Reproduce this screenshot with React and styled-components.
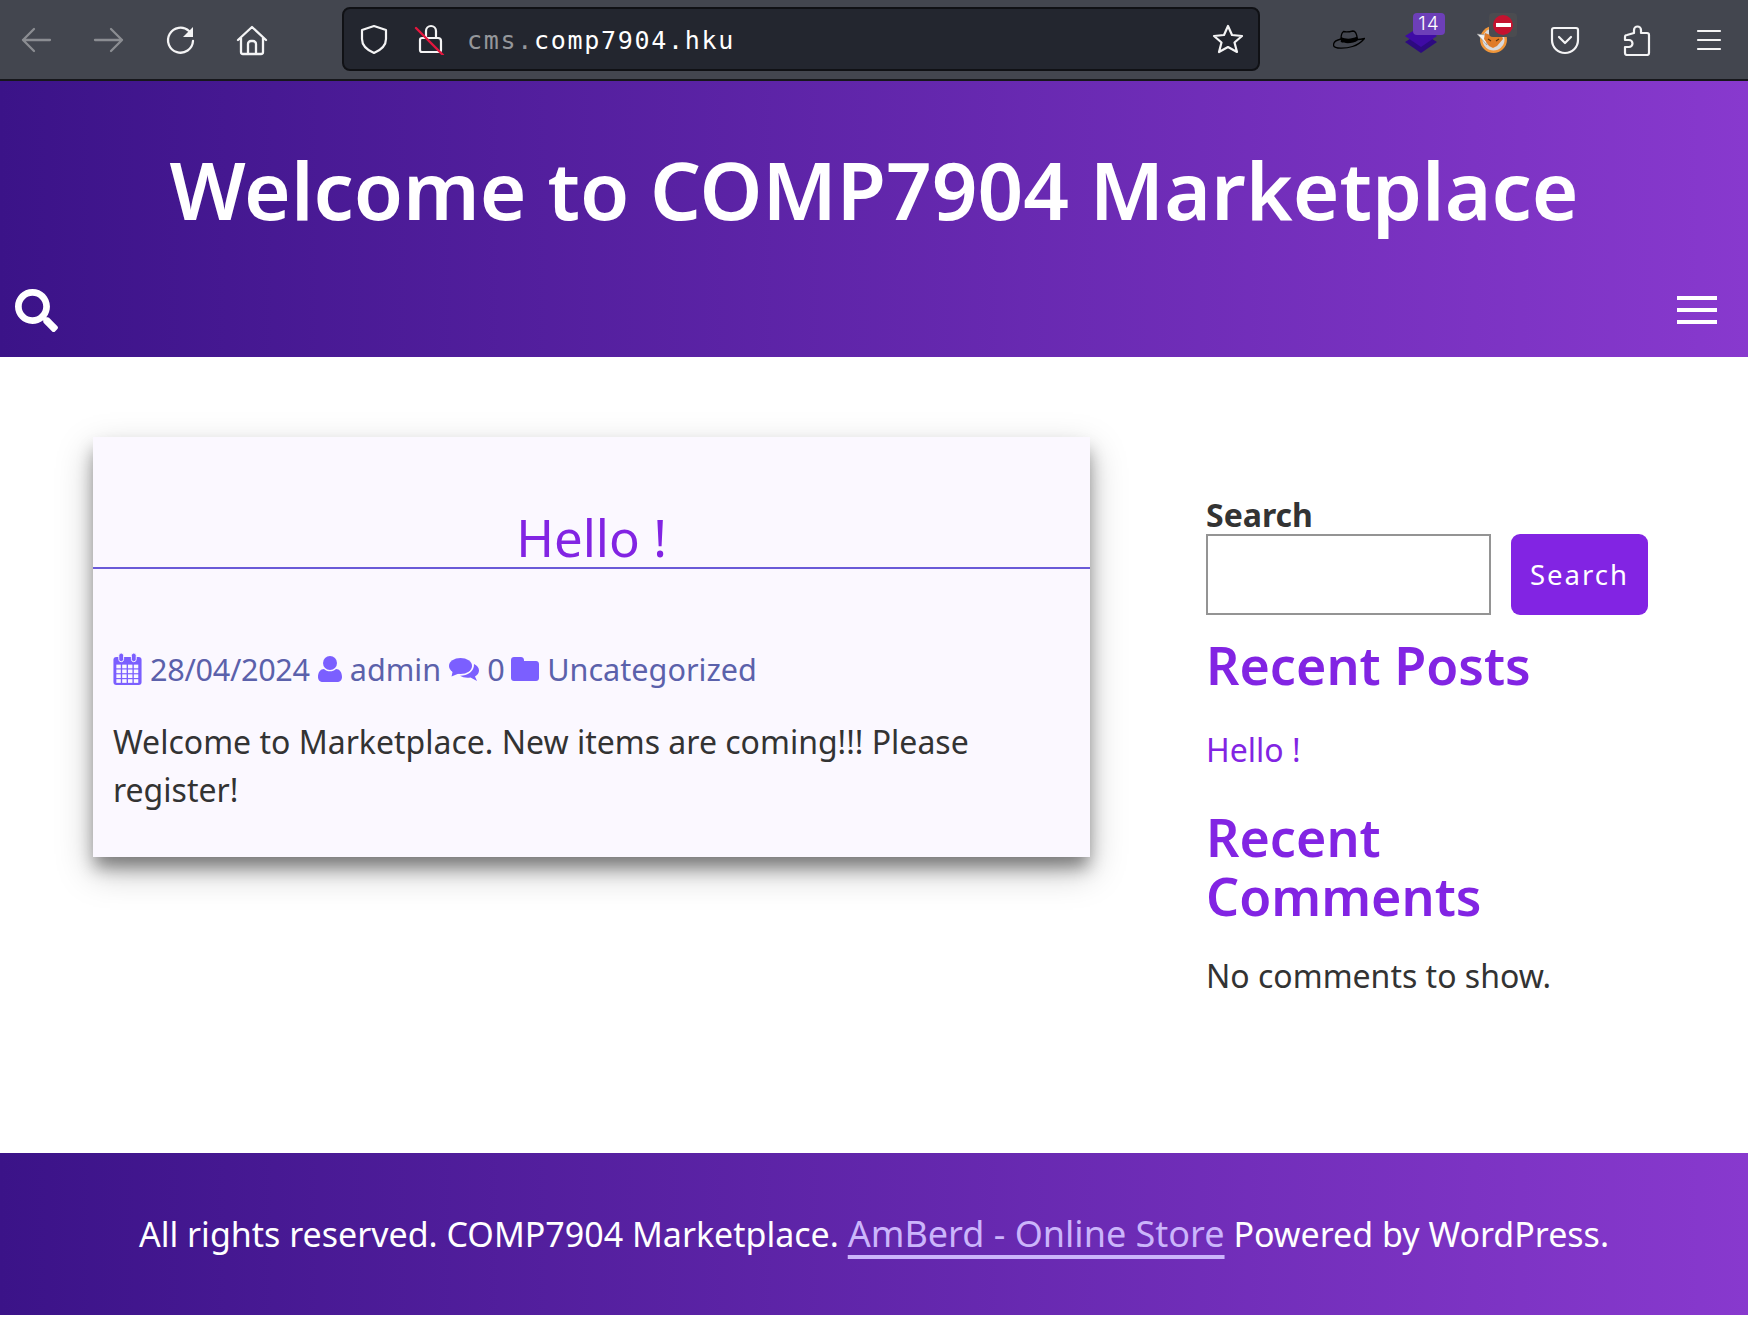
import React from "react";
import styled, { createGlobalStyle } from "styled-components";
import { FaSearch } from "react-icons/fa";

const Global = createGlobalStyle`
  html, body { margin: 0; padding: 0; background: #fff; }
  body { font-family: "Noto Sans", sans-serif; color: #333; }
  * { box-sizing: border-box; }
`;
const gradient = "linear-gradient(90deg, #3b1388 0%, #8839ce 100%)";

const Toolbar = styled.div`
  height: 81px; background: #43464f; border-bottom: 2px solid #16171b;
  display: flex; align-items: center; position: relative; padding-left: 19px;
`;
const NavIcon = styled.svg`
  width: 34px; height: 34px; flex: none; margin-right: ${p => p.$mr}px;
  fill: none; stroke: ${p => (p.$dim ? "#8b8d92" : "#f4f4f5")}; stroke-width: 2.3;
  stroke-linecap: round; stroke-linejoin: round;
`;
const UrlBar = styled.div`
  width: 918px; height: 64px; margin: 0 0 1px 36px; background: #23262f;
  border: 2px solid #101115; border-radius: 8px; display: flex; align-items: center;
  padding-left: 14px; padding-right: 14px; flex: none;
`;
const UrlIcon = styled.svg`
  width: 32px; height: 32px; flex: none; margin-right: ${p => p.$mr || 0}px;
  fill: none; stroke: #f4f4f5; stroke-width: 2.2; stroke-linecap: round; stroke-linejoin: round;
`;
const UrlText = styled.div`
  font-family: "DejaVu Sans Mono", monospace; font-size: 25px; color: #fff; flex: 1;
  letter-spacing: 1.7px; margin-left: 21px; padding-top: 2px;
`;
const Dim = styled.span` color: #95979b; `;
const Exts = styled.div` display: flex; align-items: center; margin-left: 53px; `;
const Ext = styled.div`
  width: 72px; height: 40px; display: flex; align-items: center; justify-content: center;
  position: relative; flex: none;
`;
const CountBadge = styled.span`
  position: absolute; left: 28px; top: -7px; background: #6d3fb8; color: #fff; width: 32px; height: 22px;
  border-radius: 4px; font-size: 19px; line-height: 22px; text-align: center; font-family: "Inter", sans-serif;
  font-weight: 300; letter-spacing: 1px;
`;
const BlockBadge = styled.span`
  position: absolute; left: 32px; top: -7px; width: 28px; height: 24px; background: #4b4c50; border-radius: 4px;
  display: flex; align-items: center; justify-content: center;
`;
const BlockDot = styled.span`
  width: 20px; height: 20px; background: #c4122f; border-radius: 50%; display: flex; align-items: center; justify-content: center;
`;
const BlockBar = styled.span` width: 15px; height: 4px; background: #fff; `;

const Hero = styled.header`
  height: 276px; background: ${gradient}; color: #fff; display: flex; flex-direction: column;
`;
const Title = styled.h1`
  margin: 0; text-align: center; font-size: 80px; font-weight: 600; line-height: 110px; padding-top: 53px; height: 207px;
`;
const HeroBar = styled.div`
  display: flex; justify-content: space-between; align-items: center; padding: 0 31px 0 15px; height: 44px;
`;
const Burger = styled.div`
  width: 40px; height: 28px; display: flex; flex-direction: column; justify-content: space-between;
`;
const BurgerLine = styled.span` height: 4px; background: #fff; display: block; `;

const Main = styled.main`
  display: flex; align-items: flex-start; padding: 80px 0 0 93px; height: 796px;
`;
const Card = styled.article`
  width: 997px; height: 420px; background: #fbf8ff; flex: none;
  box-shadow: 0 12px 16px -2px rgba(0,0,0,.4), 0 14px 34px rgba(0,0,0,.25);
`;
const PostTitle = styled.h2`
  margin: 0; height: 132px; border-bottom: 2px solid #6a5ad8; text-align: center; color: #8224e3;
  font-size: 51px; font-weight: 400; line-height: 67px; padding-top: 67px;
`;
const Meta = styled.div`
  display: flex; align-items: center; padding: 0 20px; margin-top: 84px; height: 32px; font-size: 30.6px; color: #5b61ab;
  gap: 8px;
`;
const MetaDigits = styled.span` letter-spacing: ${p => p.$ls}px; `;
const MetaSvg = styled.svg`
  flex: none; fill: #7b5fff; display: block;
`;
const Body = styled.p`
  margin: 33px 20px 0; font-size: 32px; line-height: 48px; color: #333;
`;
const Side = styled.aside`
  width: 450px; margin-left: 116px; padding-top: 60px; flex: none;
`;
const Label = styled.div` font-size: 32px; font-weight: 700; color: #333; line-height: 36px; height: 37px; `;
const SearchRow = styled.div` display: flex; gap: 20px; `;
const Input = styled.input`
  width: 285px; height: 81px; border: 2px solid #949494; background: #fff; border-radius: 0; flex: none;
`;
const Btn = styled.button`
  width: 137px; height: 81px; border: 0; background: #8224e3; color: #fff; border-radius: 9px; flex: none;
  font-family: "Noto Sans", sans-serif; font-size: 27.5px; letter-spacing: 2px;
`;
const SideHead = styled.h2`
  margin: ${p => p.$mt}px 0 0; color: #8224e3; font-size: 52px; line-height: 59px; font-weight: 600; width: 440px;
`;
const SideLink = styled.div` margin-top: 34px; color: #8224e3; font-size: 32px; line-height: 44px; `;
const SideText = styled.div` margin-top: 29px; color: #333; font-size: 32px; line-height: 44px; `;

const Footer = styled.footer`
  height: 162px; padding-bottom: 2px; background: ${gradient}; color: #fff; font-size: 34px;
  display: flex; align-items: center; justify-content: center;
`;
const FootLine = styled.div` white-space: pre; `;
const FootLink = styled.a`
  color: #cbb5fb; font-size: 36px; text-decoration: underline; text-decoration-thickness: 4px;
  text-underline-offset: 8px; text-decoration-skip-ink: none;
`;
const FootPad = styled.div` height: 11px; `;

const cols = [3, 9, 15, 21];
const rows = [12, 17, 22, 27];

export default function App() {
  return (
    <>
      <Global />
      <Toolbar>
        <NavIcon viewBox="0 0 34 34" $dim $mr={39}><path d="M31 17H4M15 6 4 17l11 11" /></NavIcon>
        <NavIcon viewBox="0 0 34 34" $dim $mr={38}><path d="M3 17h27M19 6l11 11-11 11" /></NavIcon>
        <NavIcon viewBox="0 0 34 34" $mr={37}><path d="M29 18a12.5 12.5 0 1 1-4-10" /><path d="M29 4v10H19z" fill="#f4f4f5" stroke="none" /></NavIcon>
        <NavIcon viewBox="0 0 34 34" $mr={37}><path d="M3 17 17 4l14 13M6 15v14a2 2 0 0 0 2 2h18a2 2 0 0 0 2-2V15M13 31V21a3 3 0 0 1 3-3h2a3 3 0 0 1 3 3v10" /></NavIcon>
        <UrlBar>
          <UrlIcon viewBox="0 0 32 32" $mr={24}><path d="M16 3 4 7v9c0 7 5 11 12 14 7-3 12-7 12-14V7z" /></UrlIcon>
          <UrlIcon viewBox="0 0 32 32">
            <path d="M8 15h16a3 3 0 0 1 3 3v9a2 2 0 0 1-2 2H8a2 2 0 0 1-2-2V17a2 2 0 0 1 2-2zM12 15V8a5 5 0 0 1 10 0v7" />
            <path d="M2 5l27 27" stroke="#e3173e" strokeWidth="2.4" />
          </UrlIcon>
          <UrlText><Dim>cms.</Dim>comp7904.hku</UrlText>
          <UrlIcon viewBox="0 0 32 32"><path d="m16 3 4 9 10 1-7.500 6.500L25 29l-9-5-9 5 2.500-9.500L2 13l10-1z" /></UrlIcon>
        </UrlBar>
        <Exts>
          <Ext>
            <svg width="32" height="20" viewBox="0 0 32 20">
              <path d="M8 9c0-3 .5-6 2.500-7.500 3 .8 6 .3 9.500-.5 2.500 0 4 4 4.500 8.500 3 0 5-.5 7-1-3 3.500-7 6.500-12 8-6 2-19 3-19-1.500 0-3 3-5 7.500-6z" fill="none" stroke="#000" strokeWidth="1.300" strokeLinejoin="round" />
              <path d="M8 7c5 2.500 11 2 16-.5l.7 4c-4 3-12 3.500-17 1.500z" fill="#000" />
            </svg>
          </Ext>
          <Ext>
            <svg width="32" height="27" viewBox="0 0 32 27">
              <path d="M16 6 32 16 16 27 0 16z" fill="#2d0a80" />
              <path d="M16 0 32 10 16 21 0 10z" fill="#3f0ba5" />
            </svg>
            <CountBadge>14</CountBadge>
          </Ext>
          <Ext>
            <svg width="32" height="27" viewBox="0 0 32 27">
              <circle cx="16.500" cy="13.500" r="13.500" fill="#f0963a" />
              <circle cx="16.500" cy="13.500" r="11" fill="#d9d9dc" />
              <path d="M0 8l9 1 1 10z" fill="#f2f2f2" stroke="#8a8a8a" strokeWidth=".6" />
              <path d="M8 7l8 3 8-3 2 6-6 7-4 2-4-2-5-7z" fill="#e07b28" />
              <path d="M11 13l3 2M22 13l-3 2" stroke="#5b3510" strokeWidth="1.200" />
            </svg>
            <BlockBadge><BlockDot><BlockBar /></BlockDot></BlockBadge>
          </Ext>
          <Ext>
            <UrlIcon viewBox="0 0 32 32"><path d="M5 4h22a2 2 0 0 1 2 2v10a13 13 0 0 1-26 0V6a2 2 0 0 1 2-2zM10 13l6 6 6-6" /></UrlIcon>
          </Ext>
          <Ext>
            <UrlIcon viewBox="0 0 32 32"><path d="M13 9V6a3.500 3.500 0 0 1 7 0v3h6a2 2 0 0 1 2 2v18a2 2 0 0 1-2 2H6a2 2 0 0 1-2-2v-6h4a3 3 0 0 0 0-7H4v-3a2 2 0 0 1 2-2z" /></UrlIcon>
          </Ext>
          <Ext>
            <UrlIcon viewBox="0 0 32 32"><path d="M5 7h22M5 16h22M5 25h22" /></UrlIcon>
          </Ext>
        </Exts>
      </Toolbar>
      <Hero>
        <Title>Welcome to COMP7904 Marketplace</Title>
        <HeroBar>
          <FaSearch size={43} />
          <Burger><BurgerLine /><BurgerLine /><BurgerLine /></Burger>
        </HeroBar>
      </Hero>
      <Main>
        <Card>
          <PostTitle>Hello !</PostTitle>
          <Meta>
            <MetaSvg width="29" height="32" viewBox="0 0 29 33">
              <rect x="0" y="4" width="29" height="29" rx="3" />
              <rect x="5.500" y="0" width="5" height="9" rx="2.500" stroke="#faf8ff" strokeWidth="1" />
              <rect x="18.500" y="0" width="5" height="9" rx="2.500" stroke="#faf8ff" strokeWidth="1" />
              {rows.map(r => cols.map(c => (
                <rect key={`${r}-${c}`} x={c} y={r} width="4.600" height="3.800" fill="#faf8ff" />
              )))}
            </MetaSvg>
            <MetaDigits $ls={-0.3}>28/04/2024</MetaDigits>
            <MetaSvg width="24" height="26" viewBox="0 0 24 26">
              <circle cx="12" cy="7" r="7" />
              <path d="M6 13c1.500 1.500 3.700 2.300 6 2.300s4.500-.8 6-2.300c3.500 0 6 3 6 8 0 3-2 5-5 5H5c-3 0-5-2-5-5 0-5 2.500-8 6-8z" />
            </MetaSvg>
            admin
            <MetaSvg width="30" height="23" viewBox="0 0 30 23">
              <ellipse cx="11.500" cy="8" rx="11.500" ry="8" />
              <path d="M4 12 2.500 18.500 11 15z" />
              <path d="M25 6c3 1.500 5 3.800 5 6.500 0 2.500-1.500 4.600-4 6l2 4.500-6.500-3.500c-1 .2-2 .3-3 .3-3 0-5.500-.8-7.500-2 7 .2 14.500-4 14-11.800z" />
            </MetaSvg>
            <MetaDigits $ls={-1.5}>0</MetaDigits>
            <MetaSvg width="28" height="24" viewBox="0 0 28 24">
              <path d="M3 0h7c1.500 0 3 1.200 3 3v1h12c1.700 0 3 1.300 3 3v14c0 1.700-1.300 3-3 3H3c-1.700 0-3-1.300-3-3V3C0 1.300 1.300 0 3 0z" />
            </MetaSvg>
            Uncategorized
          </Meta>
          <Body>Welcome to Marketplace. New items are coming!!! Please register!</Body>
        </Card>
        <Side>
          <Label>Search</Label>
          <SearchRow><Input /><Btn>Search</Btn></SearchRow>
          <SideHead $mt={20}>Recent Posts</SideHead>
          <SideLink>Hello !</SideLink>
          <SideHead $mt={35}>Recent Comments</SideHead>
          <SideText>No comments to show.</SideText>
        </Side>
      </Main>
      <Footer>
        <FootLine>All rights reserved. COMP7904 Marketplace. <FootLink>AmBerd - Online Store</FootLink> Powered by WordPress.</FootLine>
      </Footer>
      <FootPad />
    </>
  );
}
